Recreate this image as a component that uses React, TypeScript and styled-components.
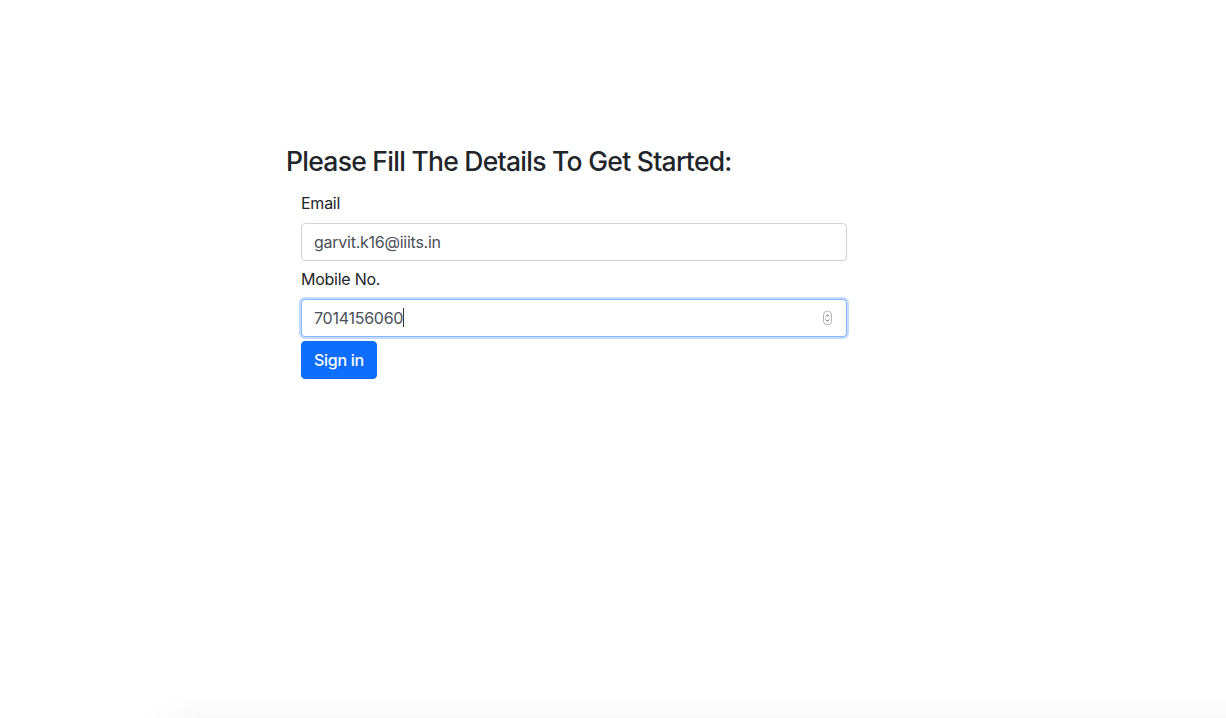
import React from 'react';
import styled, { createGlobalStyle } from 'styled-components';

const GlobalStyle = createGlobalStyle`
  html, body {
    margin: 0;
    padding: 0;
    height: 100%;
    background: #ffffff;
  }
  body {
    font-family: Inter, "Liberation Sans", Arial, sans-serif;
    color: #212529;
    font-size: 16px;
    line-height: 1.5;
    letter-spacing: -0.25px;
    overflow: hidden;
  }
  * {
    box-sizing: border-box;
  }
`;

const Page = styled.div`
  height: 100vh;
  display: flex;
  flex-direction: column;
`;

const Main = styled.main`
  flex: 1;
  padding: 146px 0 0 286px;
`;

const Title = styled.h3`
  margin: 0 0 13px;
  font-size: 26.5px;
  font-weight: 500;
  line-height: 1.2;
  letter-spacing: -0.73px;
  color: #212529;
`;

const Form = styled.form`
  width: 546px;
  margin-left: 15px;
  display: flex;
  flex-direction: column;
`;

const Label = styled.label`
  display: block;
  margin-bottom: 8px;
  font-size: 16px;
  line-height: 24px;
`;

const FieldGroup = styled.div`
  margin-bottom: 6px;
`;

const Input = styled.input`
  display: block;
  width: 100%;
  height: 38px;
  padding: 6px 12px;
  font-family: inherit;
  font-size: 16px;
  letter-spacing: inherit;
  color: #495057;
  background: #fff;
  border: 1px solid #ced4da;
  border-radius: 4px;
  outline: none;
`;

const FocusedField = styled.div`
  position: relative;
  display: flex;
  align-items: center;
  width: 100%;
  height: 38px;
  padding: 6px 12px;
  font-size: 16px;
  color: #495057;
  background: #fff;
  border: 1px solid #86b7fe;
  border-radius: 4px;
  box-shadow: 0 0 0 2px rgba(13, 110, 253, 0.25);
`;

const Caret = styled.span`
  display: inline-block;
  width: 1px;
  height: 19px;
  background: #333;
`;

const Spinner = styled.span`
  position: absolute;
  right: 14px;
  top: 50%;
  transform: translateY(-50%);
  display: flex;
`;

const Button = styled.button`
  align-self: flex-start;
  margin-top: -2px;
  height: 38px;
  padding: 6px 12px;
  font-family: inherit;
  font-size: 16px;
  font-weight: 500;
  letter-spacing: -0.3px;
  color: #fff;
  background: #0d6efd;
  border: 1px solid #0d6efd;
  border-radius: 4px;
  cursor: pointer;
`;

const BottomShade = styled.div`
  height: 22px;
  margin-left: 140px;
  background: linear-gradient(to bottom, rgba(0, 0, 0, 0), rgba(0, 0, 0, 0.025));
  mask-image: linear-gradient(to right, transparent, #000 60px);
`;

export default function App() {
  return (
    <Page>
      <GlobalStyle />
      <Main>
        <Title>Please Fill The Details To Get Started:</Title>
        <Form onSubmit={(e) => e.preventDefault()}>
          <FieldGroup>
            <Label htmlFor="email">Email</Label>
            <Input id="email" type="email" defaultValue="garvit.k16@iiits.in" />
          </FieldGroup>
          <FieldGroup>
            <Label>Mobile No.</Label>
            <FocusedField>
              7014156060
              <Caret />
              <Spinner>
                <svg width="9" height="15" viewBox="0 0 9 15">
                  <rect x="0.5" y="0.5" width="8" height="14" rx="4" fill="#fff" stroke="#b5b5b5" />
                  <path d="M2.8 6 L4.5 4.2 L6.2 6" fill="none" stroke="#555" strokeWidth="0.9" />
                  <path d="M2.8 9 L4.5 10.8 L6.2 9" fill="none" stroke="#555" strokeWidth="0.9" />
                </svg>
              </Spinner>
            </FocusedField>
          </FieldGroup>
          <Button type="submit">Sign in</Button>
        </Form>
      </Main>
      <BottomShade />
    </Page>
  );
}
